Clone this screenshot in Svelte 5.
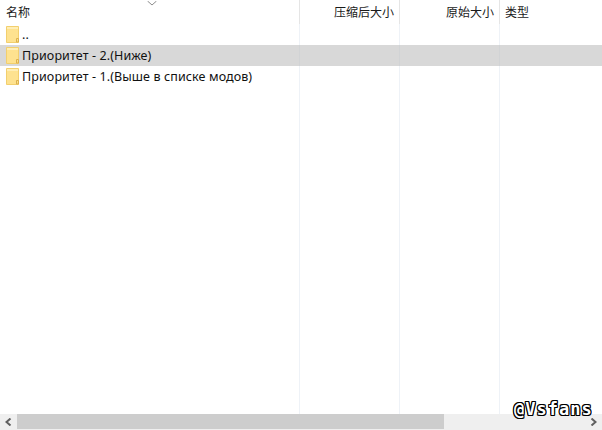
<script>
  const rows = [
    { name: '..' },
    { name: 'Приоритет - 2.(Ниже)', selected: true },
    { name: 'Приоритет - 1.(Выше в списке модов)' }
  ];
</script>

<div class="window">
  <div class="header">
    <svg class="sort" width="10" height="5" viewBox="0 0 10 5"><path d="M0.5 0 L5 4 L9.5 0" fill="none" stroke="#8c8c8c" /></svg>
    <div class="col name">名称</div>
    <div class="col packed">压缩后大小</div>
    <div class="col orig">原始大小</div>
    <div class="col type">类型</div>
  </div>

  <div class="list">
    <div class="lines">
      <span class="line first"></span>
      <span class="line second"></span>
      <span class="line third"></span>
    </div>
    {#each rows as row}
      <div class="row" class:selected={row.selected}>
        <svg class="folder" width="13" height="17" viewBox="0 0 13 17">
          <path d="M0.5 0.5 H12.5 V16.5 H0.5 Z" fill="#fee28f" stroke="#f2cf6e" />
          <path d="M1 1 H12 V3 H1 Z" fill="#ffeeb5" />
          <path d="M10.5 16 V12.5 H12.5 V16 Z" fill="#fbe08a" stroke="#dcb14e" />
        </svg>
        <span class="label">{row.name}</span>
      </div>
    {/each}
  </div>

  <div class="scrollbar">
    <div class="arrow">
      <svg width="7" height="8" viewBox="0 0 7 8"><path d="M5.5 0.5 L1.5 4 L5.5 7.5" fill="none" stroke="#606060" stroke-width="2" /></svg>
    </div>
    <div class="thumb"></div>
    <div class="track"></div>
    <div class="arrow">
      <svg width="7" height="8" viewBox="0 0 7 8"><path d="M1.5 0.5 L5.5 4 L1.5 7.5" fill="none" stroke="#606060" stroke-width="2" /></svg>
    </div>
  </div>

  <div class="mark">@Vsfans</div>
</div>

<style>
  :global(body) {
    background: #fff;
  }

  .window {
    position: relative;
    width: 602px;
    height: 430px;
    display: flex;
    flex-direction: column;
    overflow: hidden;
    font-family: "Noto Sans CJK SC", "Liberation Sans", sans-serif;
    font-size: 12px;
    color: #1a1a1a;
  }

  .header {
    position: relative;
    height: 24px;
    flex: none;
    display: flex;
  }

  .sort {
    position: absolute;
    left: 147px;
    top: 1px;
  }

  .col {
    line-height: 23px;
    border-right: 1px solid #e5e5e5;
    box-sizing: border-box;
  }

  .name {
    width: 300px;
    padding-left: 6px;
  }

  .packed,
  .orig {
    width: 100px;
    padding-right: 5px;
    text-align: right;
  }

  .type {
    flex: 1;
    padding-left: 5px;
    border-right: none;
  }

  .list {
    position: relative;
    flex: 1;
  }

  .lines span {
    position: absolute;
    top: 0;
    bottom: 0;
    width: 1px;
    background: #eef2f7;
  }

  .first {
    left: 299px;
  }

  .second {
    left: 399px;
  }

  .third {
    left: 499px;
  }

  .row {
    height: 21px;
    display: flex;
    align-items: center;
    padding-left: 6px;
    gap: 3px;
  }

  .selected {
    background: rgba(190, 190, 190, 0.6);
    position: relative;
  }

  .folder {
    flex: none;
  }

  .label {
    font-family: "Noto Sans", "Liberation Sans", sans-serif;
    font-size: 12.5px;
    letter-spacing: 0.11px;
    color: #111;
  }

  .scrollbar {
    height: 16px;
    flex: none;
    display: flex;
    background: #efefef;
  }

  .arrow {
    width: 17px;
    flex: none;
    display: flex;
    align-items: center;
    justify-content: center;
  }

  .thumb {
    width: 427px;
    margin-bottom: 1px;
    background: #cdcdcd;
  }

  .track {
    flex: 1;
  }

  .mark {
    position: absolute;
    left: 514px;
    top: 399px;
    font-family: "DejaVu Sans Mono", monospace;
    font-size: 17px;
    letter-spacing: 1px;
    line-height: 20px;
    font-weight: bold;
    color: #fff;
    text-shadow: -1px 0 #000, 1px 0 #000, 0 -1px #000, 0 1px #000, -1px -1px #000, 1px 1px #000, 1px -1px #000, -1px 1px #000;
  }
</style>
